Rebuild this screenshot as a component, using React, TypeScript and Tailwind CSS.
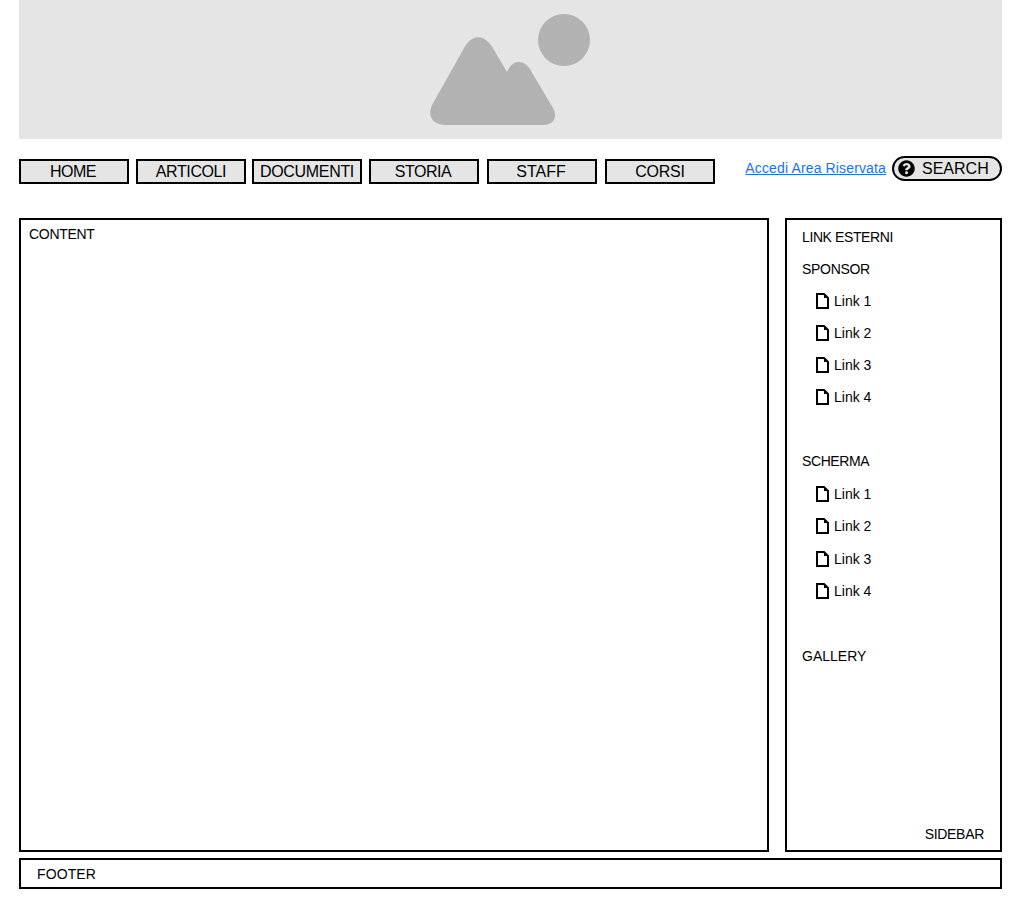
import { FaQuestionCircle } from "react-icons/fa";

const nav = [
  { label: "HOME", cls: "w-[110px] pr-[2px] tracking-[-0.5px]" },
  { label: "ARTICOLI", cls: "w-[110px] ml-[7px] tracking-[-0.4px]" },
  { label: "DOCUMENTI", cls: "w-[110px] ml-[6px] tracking-[-0.33px]" },
  { label: "STORIA", cls: "w-[110px] ml-[7px] pr-[2px] tracking-[-0.5px]" },
  { label: "STAFF", cls: "w-[110px] ml-[8px] pr-[2px]" },
  { label: "CORSI", cls: "w-[110px] ml-[8px] tracking-[-0.2px]" },
];

function FileIcon() {
  return (
    <svg width="13" height="16" viewBox="0 0 13 16" className="shrink-0">
      <path d="M1 1H8L12 5V15H1Z" fill="none" stroke="#000" strokeWidth="2" strokeLinejoin="miter" />
      <path d="M8 1V5H12Z" fill="#000" />
    </svg>
  );
}

function Row({ label, cls }: { label?: string; cls: string }) {
  return <div className={`${cls} pt-[8px] leading-[16px]`}>{label}</div>;
}

function LinkRow({ label, cls }: { label: string; cls: string }) {
  return (
    <div className={`${cls} pt-[8px] pl-[14px] flex items-start gap-[5px] leading-[16px]`}>
      <FileIcon />
      <span>{label}</span>
    </div>
  );
}

export default function App() {
  return (
    <div className="w-[1024px] h-[900px] bg-white pl-[19px] pr-[22px] text-black font-['Liberation_Sans',Arial,sans-serif]">
      <div className="h-[139px] bg-[#e5e5e5] flex justify-center">
        <svg width="181" height="139" viewBox="420 0 181 139">
          <circle cx="564" cy="40" r="26" fill="#b2b2b2" />
          <path
            d="M446 125C433 125 427 117 432 105L463 50C471 33 485 33 494 50L507 72C512 59 525 59 531 71L553 108C558 117 554 125 543 125Z"
            fill="#b2b2b2"
          />
        </svg>
      </div>

      <div className="h-[79px] flex items-start">
        <div className="flex mt-[20px]">
          {nav.map((n) => (
            <div
              key={n.label}
              className={`${n.cls} h-[25px] border-2 border-black bg-[#e5e5e5] flex items-center justify-center text-base leading-none`}
            >
              {n.label}
            </div>
          ))}
        </div>
        <a className="ml-auto mt-[21px] text-sm leading-[16px] tracking-[0.14px] text-[#1a6fff] underline">
          Accedi Area Riservata
        </a>
        <div className="ml-[6px] mt-[17px] w-[110px] h-[25px] rounded-full border-2 border-black bg-[#e5e5e5] flex items-center pl-[4px] gap-[7px] text-base leading-none">
          <FaQuestionCircle className="w-[17px] h-[17px] text-black" />
          <span>SEARCH</span>
        </div>
      </div>

      <div className="flex h-[634px] gap-[16px] text-sm">
        <div className="w-[750px] border-2 border-black pl-[8px] pt-[6px] leading-[16px] tracking-[-0.3px]">CONTENT</div>
        <div className="w-[217px] border-2 border-black pl-[15px] pr-[16px] pt-[1px] flex flex-col">
          <Row label="LINK ESTERNI" cls="h-[32px] tracking-[-0.4px]" />
          <Row label="SPONSOR" cls="h-[32px] tracking-[-0.3px]" />
          <LinkRow label="Link 1" cls="h-[32px]" />
          <LinkRow label="Link 2" cls="h-[32px]" />
          <LinkRow label="Link 3" cls="h-[32px]" />
          <LinkRow label="Link 4" cls="h-[32px]" />
          <Row cls="h-[32px]" />
          <Row label="SCHERMA" cls="h-[33px] tracking-[-0.4px]" />
          <LinkRow label="Link 1" cls="h-[32px]" />
          <LinkRow label="Link 2" cls="h-[33px]" />
          <LinkRow label="Link 3" cls="h-[32px]" />
          <LinkRow label="Link 4" cls="h-[32px]" />
          <Row cls="h-[33px]" />
          <Row label="GALLERY" cls="h-[32px]" />
          <div className="mt-auto mb-[8px] text-right leading-[16px] tracking-[-0.3px]">SIDEBAR</div>
        </div>
      </div>

      <div className="mt-[6px] h-[31px] border-2 border-black pl-[16px] flex items-center text-sm tracking-[0.1px]">
        FOOTER
      </div>
    </div>
  );
}
